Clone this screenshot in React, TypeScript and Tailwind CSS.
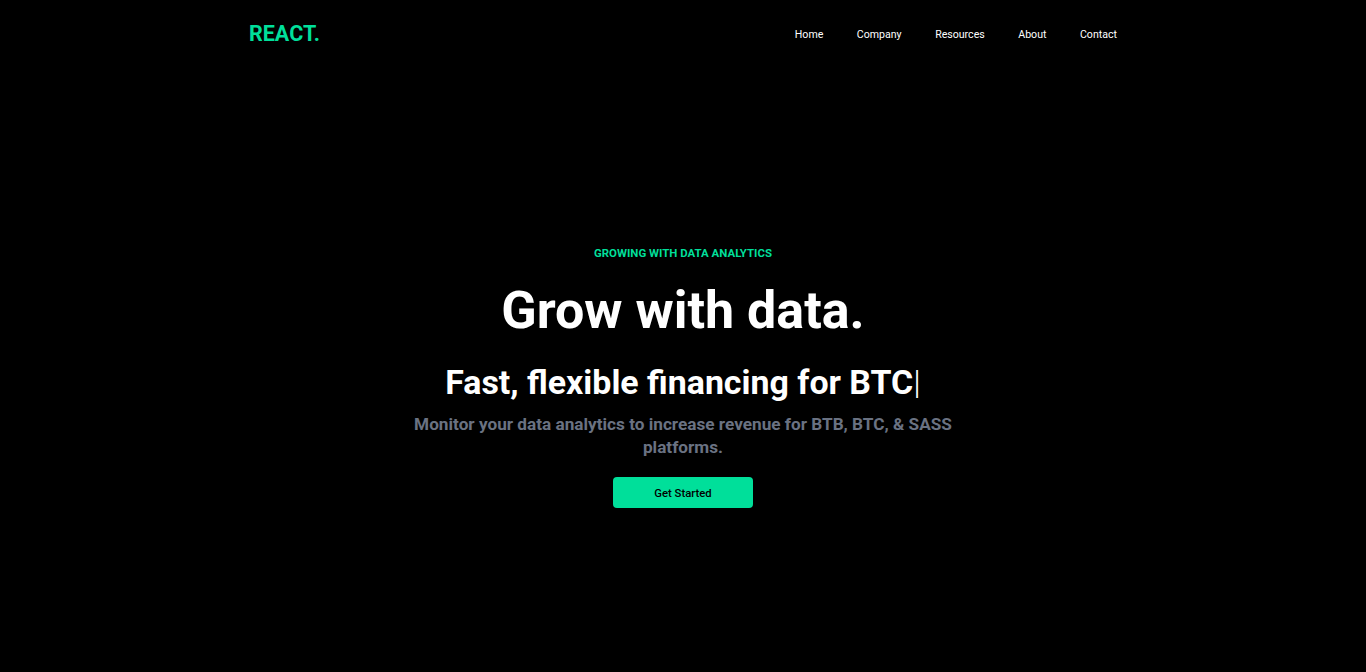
import React from "react";

const links = ["Home", "Company", "Resources", "About", "Contact"];

function Navbar() {
  return (
    <div className="max-w-[868px] mx-auto h-[67px] flex justify-between items-center text-white">
      <h1 className="text-[21.5px] leading-none font-bold text-[#00df9a] pt-px">REACT.</h1>
      <ul className="flex gap-[33.5px] text-[10.6px] leading-none pt-[3px]">
        {links.map((l) => (
          <li key={l}>{l}</li>
        ))}
      </ul>
    </div>
  );
}

function Hero() {
  return (
    <div className="max-w-[560px] mx-auto flex flex-col items-center text-center text-white pt-[178px]">
      <p className="text-[#00df9a] font-bold text-[11.45px] leading-[16px]">GROWING WITH DATA ANALYTICS</p>
      <h1 className="text-[52px] leading-none font-bold mt-[24px]">Grow with data.</h1>
      <h2 className="text-[33.9px] leading-none font-bold mt-[29px]">
        Fast, flexible financing for BTC<span className="font-light">|</span>
      </h2>
      <p className="text-[17.2px] leading-[23px] font-bold text-gray-500 mt-[13px]">
        Monitor your data analytics to increase revenue for BTB, BTC, &amp; SASS platforms.
      </p>
      <button className="bg-[#00df9a] w-[140px] h-[31px] rounded-[4px] text-black text-[11.3px] font-medium pt-[5px] mt-[18px]">
        Get Started
      </button>
    </div>
  );
}

export default function App() {
  return (
    <div className="min-h-screen bg-black font-['Roboto',sans-serif]">
      <Navbar />
      <Hero />
    </div>
  );
}
